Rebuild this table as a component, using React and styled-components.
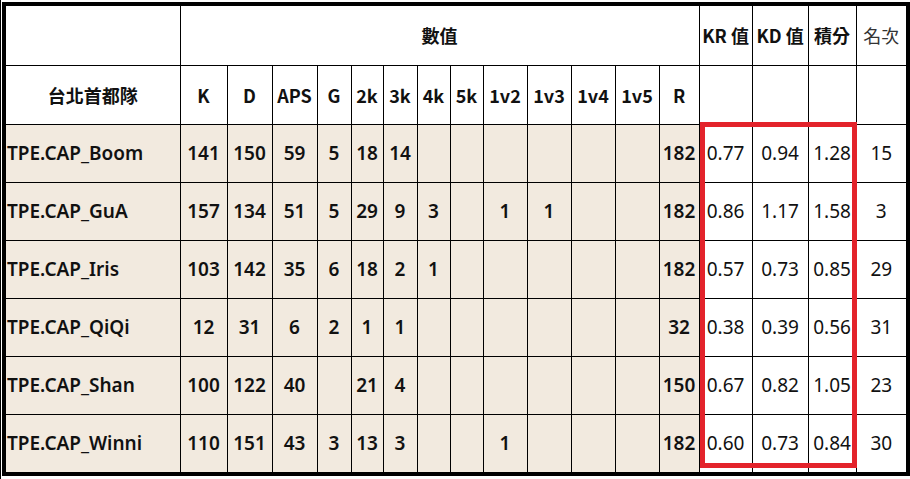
import styled, { createGlobalStyle } from 'styled-components';

const GlobalStyle = createGlobalStyle`
  html, body {
    margin: 0;
    padding: 0;
    background: #fff;
  }
`;

const widths = [174, 47, 45, 45, 34, 32, 34, 33, 33, 44, 44, 44, 44, 40, 53, 56, 48, 50];
const statHeads = ['K', 'D', 'APS', 'G', '2k', '3k', '4k', '5k', '1v2', '1v3', '1v4', '1v5', 'R'];

const players = [
  { name: 'TPE.CAP_Boom', stats: ['141', '150', '59', '5', '18', '14', '', '', '', '', '', '', '182'], kr: '0.77', kd: '0.94', score: '1.28', rank: '15' },
  { name: 'TPE.CAP_GuA', stats: ['157', '134', '51', '5', '29', '9', '3', '', '1', '1', '', '', '182'], kr: '0.86', kd: '1.17', score: '1.58', rank: '3' },
  { name: 'TPE.CAP_Iris', stats: ['103', '142', '35', '6', '18', '2', '1', '', '', '', '', '', '182'], kr: '0.57', kd: '0.73', score: '0.85', rank: '29' },
  { name: 'TPE.CAP_QiQi', stats: ['12', '31', '6', '2', '1', '1', '', '', '', '', '', '', '32'], kr: '0.38', kd: '0.39', score: '0.56', rank: '31' },
  { name: 'TPE.CAP_Shan', stats: ['100', '122', '40', '', '21', '4', '', '', '', '', '', '', '150'], kr: '0.67', kd: '0.82', score: '1.05', rank: '23' },
  { name: 'TPE.CAP_Winni', stats: ['110', '151', '43', '3', '13', '3', '', '', '1', '', '', '', '182'], kr: '0.60', kd: '0.73', score: '0.84', rank: '30' },
];

const Page = styled.div`
  width: 909px;
  height: 479px;
  border-left: 1px solid #000;
  background: #fff;
  box-sizing: border-box;
  padding: 2px 0 0 1px;
  font-family: 'Noto Sans', 'Noto Sans CJK TC', sans-serif;
  color: #111;
`;

const Frame = styled.div`
  position: relative;
  width: 908px;
  height: 474px;
  box-sizing: border-box;
  border: 4px solid #000;
  background: #fff;
`;

const Table = styled.table`
  width: 900px;
  height: 466px;
  table-layout: fixed;
  border-collapse: collapse;
`;

const Row = styled.tr`
  height: ${(p) => p.$h}px;
`;

const Cell = styled.td`
  border: 1px solid #000;
  border-top: ${(p) => (p.$top ? 'none' : '1px solid #000')};
  padding: 0;
  text-align: ${(p) => (p.$left ? 'left' : 'center')};
  padding-left: ${(p) => (p.$left ? '1px' : '0')};
  background: ${(p) => (p.$beige ? '#f2eadf' : '#fff')};
  font-size: 19px;
  font-weight: ${(p) => (p.$light ? 400 : 600)};
  white-space: nowrap;
  overflow: hidden;
  line-height: 1;
  &:first-child {
    border-left: none;
  }
  &:last-child {
    border-right: none;
  }
`;

const HeadCell = styled(Cell)`
  font-family: 'Noto Sans CJK TC', sans-serif;
  font-size: 18px;
  font-weight: ${(p) => (p.$light ? 400 : 700)};
  color: ${(p) => (p.$light ? '#333' : '#111')};
`;

const Highlight = styled.div`
  position: absolute;
  left: 694px;
  top: 116px;
  width: 157px;
  height: 346px;
  box-sizing: border-box;
  border: 5px solid #e3232b;
  pointer-events: none;
`;

export default function App() {
  return (
    <Page>
      <GlobalStyle />
      <Frame>
        <Table>
          <colgroup>
            {widths.map((w, i) => (
              <col key={i} style={{ width: w }} />
            ))}
          </colgroup>
          <tbody>
            <Row $h={59}>
              <HeadCell $top />
              <HeadCell $top colSpan={13}>數值</HeadCell>
              <HeadCell $top>KR 值</HeadCell>
              <HeadCell $top>KD 值</HeadCell>
              <HeadCell $top>積分</HeadCell>
              <HeadCell $top $light>名次</HeadCell>
            </Row>
            <Row $h={59}>
              <HeadCell>台北首都隊</HeadCell>
              {statHeads.map((h) => (
                <HeadCell key={h}>{h}</HeadCell>
              ))}
              <HeadCell />
              <HeadCell />
              <HeadCell />
              <HeadCell />
            </Row>
            {players.map((p) => (
              <Row $h={58} key={p.name}>
                <Cell $left $beige>{p.name}</Cell>
                {p.stats.map((s, i) => (
                  <Cell $beige key={i}>{s}</Cell>
                ))}
                <Cell $light>{p.kr}</Cell>
                <Cell $light>{p.kd}</Cell>
                <Cell $light>{p.score}</Cell>
                <Cell $light>{p.rank}</Cell>
              </Row>
            ))}
          </tbody>
        </Table>
        <Highlight />
      </Frame>
    </Page>
  );
}
